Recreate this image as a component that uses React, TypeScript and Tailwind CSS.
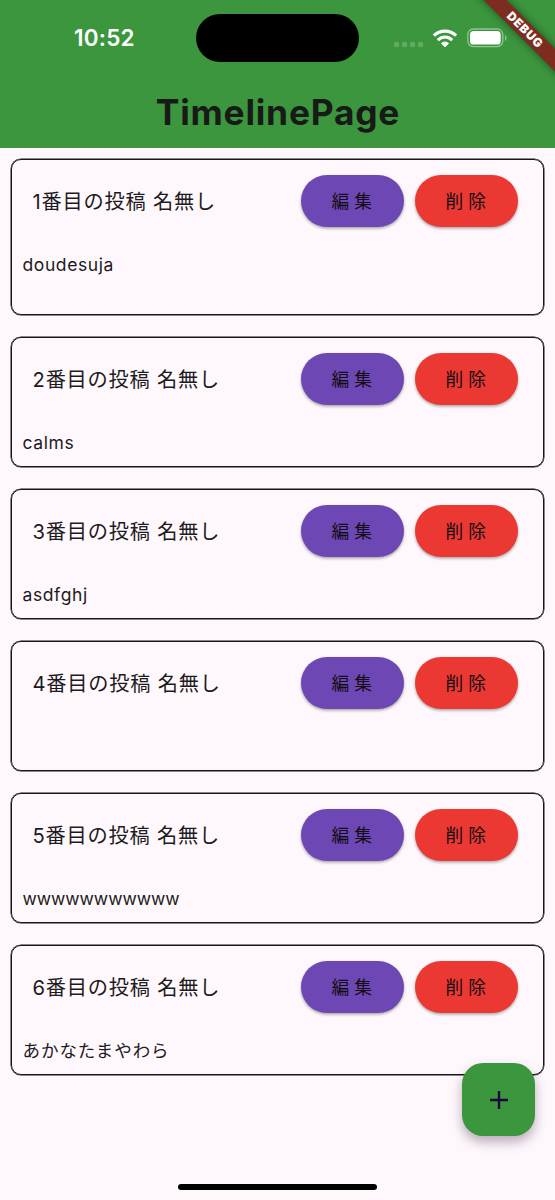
import clsx from "clsx";

type Post = {
  id: number;
  author: string;
  body: string;
  bodyClass?: string;
  tall?: boolean;
};

const posts: Post[] = [
  { id: 1, author: "名無し", body: "doudesuja", tall: true },
  { id: 2, author: "名無し", body: "calms" },
  { id: 3, author: "名無し", body: "asdfghj" },
  { id: 4, author: "名無し", body: "" },
  {
    id: 5,
    author: "名無し",
    body: "wwwwwwwwwww",
    bodyClass: "tracking-[-0.05px]",
  },
  {
    id: 6,
    author: "名無し",
    body: "あかなたまやわら",
    bodyClass: "tracking-[0.95px]",
  },
];

const WifiIcon = () => (
  <svg width="26" height="19" viewBox="0 0 26 19" fill="none">
    <path
      d="M1.9 6.7C8.2 .7 17.8 .7 24.1 6.7"
      stroke="white"
      strokeWidth="3.2"
    />
    <path
      d="M5.8 11.1C10 7.1 16 7.1 20.2 11.1"
      stroke="white"
      strokeWidth="3"
    />
    <path
      d="M9.4 14.4C11.5 12.5 14.5 12.5 16.6 14.4L13 18Z"
      fill="white"
      stroke="white"
      strokeWidth=".8"
      strokeLinejoin="round"
    />
  </svg>
);

const BatteryIcon = () => (
  <svg width="41" height="20" viewBox="0 0 41 20" fill="none">
    <rect
      x=".8"
      y="1"
      width="35"
      height="17.6"
      rx="5.5"
      stroke="white"
      strokeOpacity=".45"
      strokeWidth="1.3"
    />
    <rect x="3" y="3.1" width="30.7" height="13.4" rx="3.6" fill="white" />
    <path d="M38 7v6c2-.8 2-5.2 0-6Z" fill="white" fillOpacity=".45" />
  </svg>
);

const StatusBar = () => (
  <div className="flex h-[76px] items-center">
    <span className="ml-[74px] w-[122px] text-[22.5px] font-semibold leading-none tracking-[0.2px] text-white">
      10:52
    </span>
    <span className="h-12 w-[163px] rounded-full bg-black" />
    <div className="ml-[35px] mt-[12px] flex gap-[3px]">
      {[0, 1, 2, 3].map((i) => (
        <span key={i} className="h-[5px] w-[5px] rounded-[1.5px] bg-white/20" />
      ))}
    </div>
    <div className="ml-[8.5px] flex items-center gap-[9.5px]">
      <WifiIcon />
      <BatteryIcon />
    </div>
  </div>
);

const DebugBanner = () => (
  <div className="absolute right-0 top-0 h-[90px] w-[90px] overflow-hidden">
    <div className="absolute left-[-15px] top-[22px] flex h-[16px] w-[150px] rotate-45 items-center justify-center bg-[#7f2c20] text-[12px] font-black leading-none tracking-[0.8px] text-white shadow-[0_0_8px_rgba(0,0,0,0.5)]">
      DEBUG
    </div>
  </div>
);

const actionClass =
  "flex h-[52px] w-[103.5px] items-center justify-center rounded-full pr-px pt-[2px] text-[17.7px] text-[#120c12] shadow-[0_1.5px_3px_rgba(0,0,0,0.35)]";

const PostCard = ({ post }: { post: Post }) => (
  <article
    className={clsx(
      "flex flex-col rounded-[10px] border border-[#17141a] pl-[10.5px] shadow-[0_0_0_0.5px_#17141a]",
      post.tall ? "h-[156px]" : "h-[130px]",
    )}
  >
    <div className="flex items-center justify-between pl-[10px] pr-[25px] pt-[15px]">
      <h2 className="pt-[2px] text-[20.2px] tracking-[0.8px]">
        {post.id}番目の投稿 {post.author}
      </h2>
      <div className="flex gap-[10.5px]">
        <button className={clsx(actionClass, "bg-[#6d48b5]")}>編 集</button>
        <button className={clsx(actionClass, "bg-[#eb3833]")}>削 除</button>
      </div>
    </div>
    <p
      className={clsx(
        "mt-[25px] text-[17.5px] leading-[26px]",
        post.bodyClass ?? "tracking-[0.6px]",
      )}
    >
      {post.body}
    </p>
  </article>
);

const App = () => (
  <main className="relative h-[1200px] w-[555px] overflow-hidden bg-[#fef8fd] font-['Inter','Noto_Sans_CJK_JP',sans-serif] text-[#1d1b20]">
    <header className="h-[148px] bg-[#3c963e]">
      <StatusBar />
      <h1 className="flex h-[72px] items-center justify-center pl-px pt-px text-[35.3px] font-bold leading-none tracking-[0.8px] text-[#181a18]">
        TimelinePage
      </h1>
    </header>

    <section className="flex flex-col gap-[22px] px-[11px] pt-[11px]">
      {posts.map((post) => (
        <PostCard key={post.id} post={post} />
      ))}
    </section>

    <button
      aria-label="add"
      className="absolute left-[462px] top-[1063px] grid h-[73px] w-[73px] place-items-center rounded-[21px] bg-[#3c963e] shadow-[0_6px_12px_rgba(60,30,60,0.35)]"
    >
      <svg width="18" height="18" viewBox="0 0 18 18">
        <path d="M9 0v18M0 9h18" stroke="#150b3c" strokeWidth="2.4" />
      </svg>
    </button>

    <div className="absolute bottom-[10px] left-[178px] h-[6px] w-[199px] rounded-full bg-black" />
    <DebugBanner />
  </main>
);

export default App;
